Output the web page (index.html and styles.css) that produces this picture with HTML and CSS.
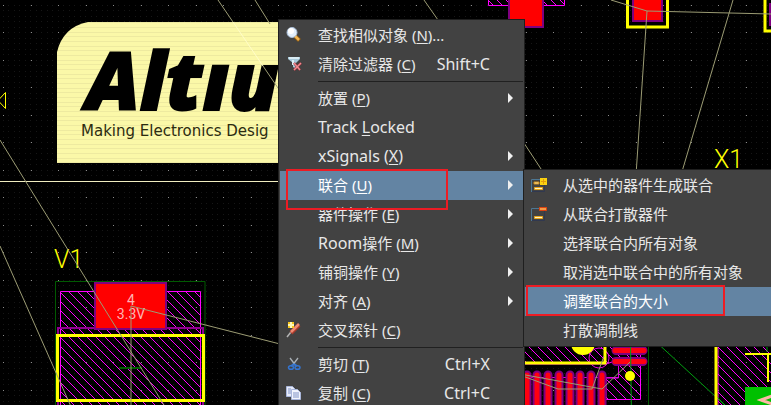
FILE: index.html
```html
<!DOCTYPE html>
<html lang="zh-CN">
<head>
<meta charset="utf-8">
<title>PCB Editor</title>
<link rel="stylesheet" href="styles.css">
</head>
<body>
<main class="editor">
  <svg class="board" aria-label="PCB">
    <defs>
      <pattern id="minor" x="3" y="5" width="11" height="11" patternUnits="userSpaceOnUse">
        <path fill="#161616" d="M0 0h1v1h-1zM5 0h1v1h-1zM0 5h1v1h-1zM5 5h1v1h-1z"/>
      </pattern>
      <pattern id="major" x="3" y="5" width="55" height="55" patternUnits="userSpaceOnUse">
        <path fill="#8c8c8c" d="M0 0h1v1h-1zM28 0h1v1h-1zM0 27h1v1h-1zM28 27h1v1h-1z"/>
      </pattern>
      <pattern id="hatch" x="2" y="0" width="9" height="9" patternUnits="userSpaceOnUse">
        <path class="hatch-line" d="M-1 -1L10 10"/>
      </pattern>
      <pattern id="scan" x="0" y="24" width="40" height="14" patternUnits="userSpaceOnUse">
        <path fill="#fbf8a8" d="M0 0h40v14h-40z"/>
        <path fill="#eeeaa0" d="M0 3h40v1h-40zM0 8h40v1h-40zM0 12h40v1h-40z"/>
      </pattern>
    </defs>

    <rect width="100%" height="100%" fill="url(#minor)"/>
    <rect width="100%" height="100%" fill="url(#major)"/>

    <g class="logo">
      <path fill="url(#scan)" d="M57 163V52Q63 27 88 22H300V163Z"/>
      <text class="logo-name" x="86" y="110">Altıu</text>
      <text class="logo-tag" x="81" y="136">Making Electronics Desig</text>
    </g>
    <path class="outline" d="M0 181.500H300"/>
    <path class="marker" d="M5.500 92.500V108.500L-2 100.500Z"/>

    <g class="part">
      <path class="hatched" d="M60.500 420V291.500H200.500V420Z"/>
      <path class="court" d="M55.500 420V281.500H205V420"/>
      <path class="body-edge" d="M58 420V328H203V420"/>
      <rect class="pad" x="95" y="283" width="71" height="46"/>
      <rect class="silk" x="57.500" y="335.500" width="146" height="65"/>
      <path class="court-mark" d="M119 368H142"/>
      <text class="net" x="131" y="305">4</text>
      <text class="net" x="131" y="319">3.3V</text>
      <text class="ref" x="54" y="268">V1</text>
    </g>

    <g class="part">
      <path class="hatched" d="M488.500 -5V5.500H564.500V-5Z"/>
      <rect class="pad" x="509" y="-10" width="34" height="37"/>
      <rect class="silk" x="627.500" y="-10" width="40" height="37"/>
      <rect class="pad" x="633" y="-10" width="29" height="31"/>
      <rect class="silk" x="765" y="-10" width="30" height="41"/>
      <rect class="pad" x="770" y="4" width="20" height="21"/>
      <text class="ref" x="714" y="168">X1</text>
    </g>

    <g class="part">
      <path class="hatched" d="M500 340H640.500V399.500H606V378H618.500V360L606 364H500Z"/>
      <path class="trace-edge" d="M500 377.500H618.500V362"/>
      <circle class="trace-edge" cx="599" cy="358" r="10"/>
      <path class="silk" d="M500 363H605V330"/>
      <circle class="dot" cx="583" cy="343" r="12"/>
      <path class="finger-mask" d="M616 350.500H643M616 361.500H643M527 375V420M537 375V420M548 375V420M559 375V420M570 375V420M580 375V420M591 375V420M602 375V420"/>
      <path class="finger" d="M615 350.500H644M615 361.500H644M527 375V420M537 375V420M548 375V420M559 375V420M570 375V420M580 375V420M591 375V420M602 375V420"/>
      <path class="court" d="M648.500 340V420"/>
      <path class="route" d="M630.500 340L631.500 420M654 340L741 420"/>
      <circle class="dot" cx="630" cy="376" r="5"/>
      <rect class="hatched" x="718" y="330" width="120" height="100"/>
      <path class="route" d="M716 396L726 406M767 340V352"/>
      <path class="silk" d="M716 330V420"/>
      <path class="silk-thin" d="M745 354H780M768 354V382"/>
      <path fill="#00c000" d="M745 387H780V420H745Z"/>
      <path class="sign" d="M775 395L761 400L775 405"/>
    </g>

    <path class="rats" d="M0 140L164 405M0 246L72 409M255 0L270 24M131 420V306L280 344M424 0L438 20M520 137L545 175M611 0L647 11L771 14M647 11L636 175M733 0L681 175M520 374L602 389L630 362M520 375L558 389H592L604 356M218 0L233 22M263 66L278 88"/>
    <path class="rats-faint" d="M233 22L263 66"/>
  </svg>

  <nav class="menu menu-main" aria-label="右键菜单">
    <button class="item"><svg class="icon" viewBox="0 0 18 18"><path d="M10 10L14.500 14.500" stroke="#8d5b12" stroke-width="4"/><path d="M10 10L14 14" stroke="#f1b451" stroke-width="2.500"/><circle cx="7" cy="6.500" r="5" fill="#e3effc" stroke="#a9bed8"/><circle cx="6" cy="5" r="3" fill="#fff"/></svg><span class="label">查找相似对象 (<u>N</u>)...</span></button>
    <button class="item"><svg class="icon" viewBox="0 0 18 18"><path d="M3 2H15V4L11 8V14L8 12V8L3 4Z" fill="#a8cadb"/><path d="M4 3H14" stroke="#eaf7fc" stroke-width="1.500"/><path d="M8 5V10" stroke="#dceef5" stroke-width="2"/><path d="M9 8L15 15M16 8L9 15" stroke="#8e2f38" stroke-width="2.500"/><path d="M9 8L15 15M16 8L9 15" stroke="#ef8b90" stroke-width="1.500"/></svg><span class="label">清除过滤器 (<u>C</u>)</span><kbd class="keys">Shift+C</kbd></button>
    <hr class="divider">
    <button class="item"><span class="label">放置 (<u>P</u>)</span><i class="arrow"></i></button>
    <button class="item"><span class="label latin">Track <u>L</u>ocked</span></button>
    <button class="item"><span class="label latin">xSignals (<u>X</u>)</span><i class="arrow"></i></button>
    <button class="item active"><span class="label">联合 (<u>U</u>)</span><i class="arrow"></i></button>
    <button class="item"><span class="label">器件操作 (<u>E</u>)</span><i class="arrow"></i></button>
    <button class="item"><span class="label"><span class="latin">Room</span>操作 (<u>M</u>)</span><i class="arrow"></i></button>
    <button class="item"><span class="label">铺铜操作 (<u>Y</u>)</span><i class="arrow"></i></button>
    <button class="item"><span class="label">对齐 (<u>A</u>)</span><i class="arrow"></i></button>
    <button class="item"><svg class="icon" viewBox="0 0 18 18"><path d="M2 16L6 11" stroke="#b4b4b4" stroke-width="1.500"/><path d="M6 12L14 4" stroke="#a8392b" stroke-width="4"/><path d="M6 11L14 3" stroke="#f08a72" stroke-width="2.500"/><path d="M3 1H9V7H3Z" fill="#f7c61c"/><path d="M6 1V7M3 4H9" stroke="#fff8b8" stroke-width="2"/></svg><span class="label">交叉探针 (<u>C</u>)</span></button>
    <hr class="divider">
    <button class="item"><svg class="icon" viewBox="0 0 18 18"><path d="M5 3L11 11M13 3L7 11" stroke="#a9b0b6" stroke-width="1.300"/><path d="M9 9L6 11M9 9L12 11" stroke="#3474cf" stroke-width="2"/><ellipse cx="6" cy="12.500" rx="2.500" ry="1.800" fill="none" stroke="#3474cf" stroke-width="1.500"/><ellipse cx="12.500" cy="12.500" rx="2.500" ry="1.800" fill="none" stroke="#3474cf" stroke-width="1.500"/></svg><span class="label">剪切 (<u>T</u>)</span><kbd class="keys">Ctrl+X</kbd></button>
    <button class="item"><svg class="icon" viewBox="0 0 18 18"><path d="M1.500 2.500H7.500L10.500 5.500V12.500H1.500Z" fill="#e7ecfa" stroke="#aab7db"/><path d="M3 5H6M3 7H7M3 9H7" stroke="#8093c5"/><path d="M6.500 5.500H12.500L15.500 8.500V15.500H6.500Z" fill="#f1f4fd" stroke="#aab7db"/><path d="M8 9H14M8 11H14M8 13H14" stroke="#8093c5"/></svg><span class="label">复制 (<u>C</u>)</span><kbd class="keys">Ctrl+C</kbd></button>
  </nav>

  <nav class="menu menu-sub" aria-label="联合">
    <button class="item"><svg class="icon" viewBox="0 0 18 18"><path d="M1.500 16V3.500H15" fill="none" stroke="#4d7794"/><path d="M2 15.500H14.500V6" fill="none" stroke="#303850"/><path d="M4 6H9V8H4Z" fill="#ffe9a8" stroke="#cf8a13"/><path d="M4.500 11.500H12.500V13.500H4.500Z" fill="#fff3c0" stroke="#e5a31c"/><path d="M10 2H17V9H10Z" fill="#fbd210"/><path d="M13.500 3V8M11 5.500H16" stroke="#e39b0b" stroke-width="1"/></svg><span class="label">从选中的器件生成联合</span></button>
    <button class="item"><svg class="icon" viewBox="0 0 18 18"><path d="M1.500 16V3.500H10" fill="none" stroke="#4d7794"/><path d="M2 15.500H14.500V6" fill="none" stroke="#303850"/><path d="M4.500 11.500H12.500V13.500H4.500Z" fill="#fff3c0" stroke="#e5a31c"/><path d="M9.500 2.500H16.500V5.500H9.500Z" fill="#f39a48" stroke="#dc4310"/></svg><span class="label">从联合打散器件</span></button>
    <button class="item"><span class="label">选择联合内所有对象</span></button>
    <button class="item"><span class="label">取消选中联合中的所有对象</span></button>
    <button class="item active"><span class="label">调整联合的大小</span></button>
    <button class="item"><span class="label">打散调制线</span></button>
  </nav>

  <div class="callout callout-union"></div>
  <div class="callout callout-resize"></div>
</main>
</body>
</html>
```
FILE: styles.css
```css
* {
  box-sizing: border-box;
}

body {
  margin: 0;
  background: #000;
  overflow: hidden;
}

.editor {
  position: relative;
  min-height: 100vh;
  overflow: hidden;
}

/* Board drawing */
.board {
  display: block;
  width: 100%;
  height: 100vh;
}

.hatch-line {
  stroke: #f0f;
  stroke-width: 1;
}

.logo-name {
  font: italic 800 80px "Open Sans", "Noto Sans", sans-serif;
  fill: #000;
  stroke: #000;
  stroke-width: 2;
}

.logo-tag {
  font: 15px "DejaVu Sans", sans-serif;
  fill: #2c2b10;
}

.outline {
  stroke: #f0edc0;
}

.marker {
  fill: none;
  stroke: #ff0;
}

.hatched {
  fill: url(#hatch);
  stroke: #f0f;
}

.trace-edge {
  fill: none;
  stroke: #e000e0;
}

.court {
  fill: none;
  stroke: #005a00;
}

.court-mark {
  stroke: #005a00;
  stroke-width: 2;
}

.body-edge {
  fill: none;
  stroke: #900090;
  stroke-width: 2;
}

.pad {
  fill: #f00;
  stroke: #800080;
  stroke-width: 2;
}

.silk {
  fill: none;
  stroke: #ff0;
  stroke-width: 3;
}

.silk-thin {
  fill: none;
  stroke: #ff0;
  stroke-width: 2;
}

.dot {
  fill: #ff0;
}

.finger-mask {
  stroke: #800080;
  stroke-width: 9;
  stroke-linecap: round;
}

.finger {
  stroke: #ff0010;
  stroke-width: 5;
  stroke-linecap: round;
}

.route {
  fill: none;
  stroke: #00a010;
}

.sign {
  fill: none;
  stroke: #ffb9a8;
  stroke-width: 3;
}

.rats {
  fill: none;
  stroke: #9c9c74;
}

.rats-faint {
  stroke: #fffcc8;
}

.net {
  font: 14px "Liberation Sans Narrow", "Roboto", sans-serif;
  fill: #ffb4b4;
  text-anchor: middle;
}

.ref {
  font: 300 25px "Roboto", sans-serif;
  fill: #ff0;
}

/* Menus */
.menu {
  position: absolute;
  display: flex;
  flex-direction: column;
  padding: 1px;
  border: 1px solid #1f1f1f;
  background: #424242;
}

.menu-main {
  left: 278px;
  top: 19px;
  width: 247px;
}

.menu-sub {
  left: 523px;
  top: 169px;
  width: 260px;
}

.item {
  display: grid;
  grid-template-columns: 38px 1fr auto 33px;
  align-items: center;
  height: 29px;
  padding: 0 0 1px;
  border: 0;
  background: none;
  color: #e8e8e8;
  font: 15px/28px "Noto Sans", "Noto Sans CJK SC", sans-serif;
  text-align: left;
  white-space: nowrap;
}

.active {
  background: #6384a3;
  color: #fff;
}

.icon {
  grid-column: 1;
  width: 18px;
  height: 18px;
  margin-left: 5px;
}

.label {
  grid-column: 2;
}

.latin,
.keys {
  font-size: 16px;
}

.item u {
  text-underline-offset: 2px;
}

.keys {
  grid-column: 3;
  font-family: inherit;
}

.arrow {
  grid-column: 4;
  grid-row: 1;
  margin-left: 18px;
  width: 0;
  border: 5px solid transparent;
  border-left-color: #f0f0f0;
  border-right-width: 0;
}

.divider {
  width: calc(100% - 38px);
  height: 1px;
  margin: 2px 0 2px 38px;
  border: 0;
  background: #202020;
}

/* Red callout frames */
.callout {
  position: absolute;
  border: 2px solid #ed1c24;
  pointer-events: none;
}

.callout-union {
  left: 286px;
  top: 169px;
  width: 162px;
  height: 41px;
}

.callout-resize {
  left: 526px;
  top: 285px;
  width: 199px;
  height: 31px;
}
```
